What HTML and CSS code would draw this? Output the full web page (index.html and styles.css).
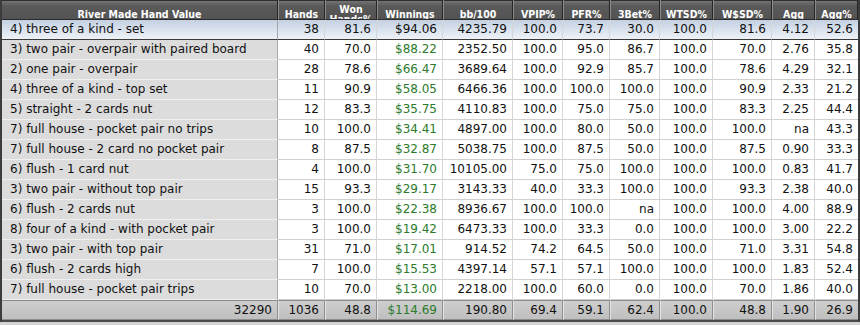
FILE: index.html
```html
<!DOCTYPE html>
<html lang="en">
<head>
    <meta charset="UTF-8">
    <title>River Made Hand Value</title>
    <link rel="stylesheet" href="styles.css">
</head>
<body>
    <div class="grid">
        <table class="stats">
            <colgroup>
                <col class="c-hand">
                <col style="width:47px"><col style="width:52px"><col style="width:66px">
                <col style="width:70px"><col style="width:50px"><col style="width:47px">
                <col style="width:50px"><col style="width:53px"><col style="width:59px">
                <col style="width:43px"><col style="width:43px">
            </colgroup>
            <thead>
                <tr>
                    <th><div class="h">River Made Hand Value</div></th>
                    <th><div class="h">Hands</div></th>
                    <th><div class="h">Won Hands%</div></th>
                    <th><div class="h">Winnings</div></th>
                    <th><div class="h">bb/100</div></th>
                    <th><div class="h">VPIP%</div></th>
                    <th><div class="h">PFR%</div></th>
                    <th><div class="h">3Bet%</div></th>
                    <th><div class="h">WTSD%</div></th>
                    <th><div class="h">W$SD%</div></th>
                    <th><div class="h">Agg</div></th>
                    <th><div class="h">Agg%</div></th>
                </tr>
            </thead>
            <tbody>
                <tr class="selected"><td class="name">4) three of a kind - set</td><td>38</td><td>81.6</td><td class="money">$94.06</td><td>4235.79</td><td>100.0</td><td>73.7</td><td>30.0</td><td>100.0</td><td>81.6</td><td>4.12</td><td>52.6</td></tr>
                <tr><td class="name">3) two pair - overpair with paired board</td><td>40</td><td>70.0</td><td class="money">$88.22</td><td>2352.50</td><td>100.0</td><td>95.0</td><td>86.7</td><td>100.0</td><td>70.0</td><td>2.76</td><td>35.8</td></tr>
                <tr><td class="name">2) one pair - overpair</td><td>28</td><td>78.6</td><td class="money">$66.47</td><td>3689.64</td><td>100.0</td><td>92.9</td><td>85.7</td><td>100.0</td><td>78.6</td><td>4.29</td><td>32.1</td></tr>
                <tr><td class="name">4) three of a kind - top set</td><td>11</td><td>90.9</td><td class="money">$58.05</td><td>6466.36</td><td>100.0</td><td>100.0</td><td>100.0</td><td>100.0</td><td>90.9</td><td>2.33</td><td>21.2</td></tr>
                <tr><td class="name">5) straight - 2 cards nut</td><td>12</td><td>83.3</td><td class="money">$35.75</td><td>4110.83</td><td>100.0</td><td>75.0</td><td>75.0</td><td>100.0</td><td>83.3</td><td>2.25</td><td>44.4</td></tr>
                <tr><td class="name">7) full house - pocket pair no trips</td><td>10</td><td>100.0</td><td class="money">$34.41</td><td>4897.00</td><td>100.0</td><td>80.0</td><td>50.0</td><td>100.0</td><td>100.0</td><td>na</td><td>43.3</td></tr>
                <tr><td class="name">7) full house - 2 card no pocket pair</td><td>8</td><td>87.5</td><td class="money">$32.87</td><td>5038.75</td><td>100.0</td><td>87.5</td><td>50.0</td><td>100.0</td><td>87.5</td><td>0.90</td><td>33.3</td></tr>
                <tr><td class="name">6) flush - 1 card nut</td><td>4</td><td>100.0</td><td class="money">$31.70</td><td>10105.00</td><td>75.0</td><td>75.0</td><td>100.0</td><td>100.0</td><td>100.0</td><td>0.83</td><td>41.7</td></tr>
                <tr><td class="name">3) two pair - without top pair</td><td>15</td><td>93.3</td><td class="money">$29.17</td><td>3143.33</td><td>40.0</td><td>33.3</td><td>100.0</td><td>100.0</td><td>93.3</td><td>2.38</td><td>40.0</td></tr>
                <tr><td class="name">6) flush - 2 cards nut</td><td>3</td><td>100.0</td><td class="money">$22.38</td><td>8936.67</td><td>100.0</td><td>100.0</td><td>na</td><td>100.0</td><td>100.0</td><td>4.00</td><td>88.9</td></tr>
                <tr><td class="name">8) four of a kind - with pocket pair</td><td>3</td><td>100.0</td><td class="money">$19.42</td><td>6473.33</td><td>100.0</td><td>33.3</td><td>0.0</td><td>100.0</td><td>100.0</td><td>3.00</td><td>22.2</td></tr>
                <tr><td class="name">3) two pair - with top pair</td><td>31</td><td>71.0</td><td class="money">$17.01</td><td>914.52</td><td>74.2</td><td>64.5</td><td>50.0</td><td>100.0</td><td>71.0</td><td>3.31</td><td>54.8</td></tr>
                <tr><td class="name">6) flush - 2 cards high</td><td>7</td><td>100.0</td><td class="money">$15.53</td><td>4397.14</td><td>57.1</td><td>57.1</td><td>100.0</td><td>100.0</td><td>100.0</td><td>1.83</td><td>52.4</td></tr>
                <tr><td class="name">7) full house - pocket pair trips</td><td>10</td><td>70.0</td><td class="money">$13.00</td><td>2218.00</td><td>100.0</td><td>60.0</td><td>0.0</td><td>100.0</td><td>70.0</td><td>1.86</td><td>40.0</td></tr>
            </tbody>
            <tfoot>
                <tr><td>32290</td><td>1036</td><td>48.8</td><td class="money">$114.69</td><td>190.80</td><td>69.4</td><td>59.1</td><td>62.4</td><td>100.0</td><td>48.8</td><td>1.90</td><td>26.9</td></tr>
            </tfoot>
        </table>
    </div>
</body>
</html>
```

FILE: styles.css
```css
body {
    margin: 0;
    background: #d4d4d4;
    font-family: "DejaVu Sans", Verdana, sans-serif;
}

.grid {
    width: 860px;
    box-sizing: border-box;
    border-left: 2px solid #3c3c3c;
    border-right: 2px solid #3c3c3c;
    border-bottom: 2px solid #4a4a4a;
    background: #d4d4d4;
}

.stats {
    width: 856px;
    table-layout: fixed;
    border-collapse: separate;
    border-spacing: 0;
    font-size: 12px;
    color: #111;
}

.c-hand {
    width: 276px;
}

/* header */
.stats th {
    padding: 0;
    background: linear-gradient(#7a7a7a, #5a5a5a 30%, #535353);
    box-shadow: inset 0 1px #2e2e2e;
    border-right: 1px solid #262626;
    border-left: 1px solid #8c8c8c;
    border-bottom: 1px solid #2a2a2a;
}
.stats th:first-child {
    border-left: none;
}
.h {
    height: 10px;
    padding-top: 9px;
    display: flex;
    align-items: center;
    justify-content: center;
    overflow: hidden;
    color: #fff;
    font-family: "DejaVu Sans Condensed", "DejaVu Sans", sans-serif;
    font-size: 10.5px;
    font-weight: bold;
    line-height: 10px;
    text-align: center;
    white-space: normal;
}

/* body */
.stats td {
    height: 19px;
    padding: 0 5px 0 0;
    text-align: right;
    white-space: nowrap;
    overflow: hidden;
    background: #fff;
    border-right: 1px solid #d6d6d6;
    border-bottom: 1px solid #d0d0d0;
    line-height: 19px;
}
.stats td.name {
    text-align: left;
    padding-left: 8px;
    background: #dcdcdc;
    border-right: 1px solid #a8a8a8;
    border-bottom: 1px solid #f0f0f0;
}
.stats td:last-child {
    border-right: none;
}
.money {
    color: #2c7a2c;
}

.selected td,
.selected td.name {
    background: linear-gradient(#c4d1e2, #dde5ef 60%, #eef2f7);
    border-bottom: 1px solid #3a3a3a;
}
.selected td.money {
    color: #111;
}

/* totals */
.stats tfoot td {
    height: 18px;
    line-height: 18px;
    background: linear-gradient(#cecece, #bfbfbf);
    border-top: 1px solid #8a8a8a;
    border-left: 1px solid #e4e4e4;
    border-right: 1px solid #8e8e8e;
    border-bottom: 1px solid #8e8e8e;
}
.stats tfoot td:first-child {
    border-left: none;
}
.stats tfoot td:last-child {
    border-right: none;
}
```
